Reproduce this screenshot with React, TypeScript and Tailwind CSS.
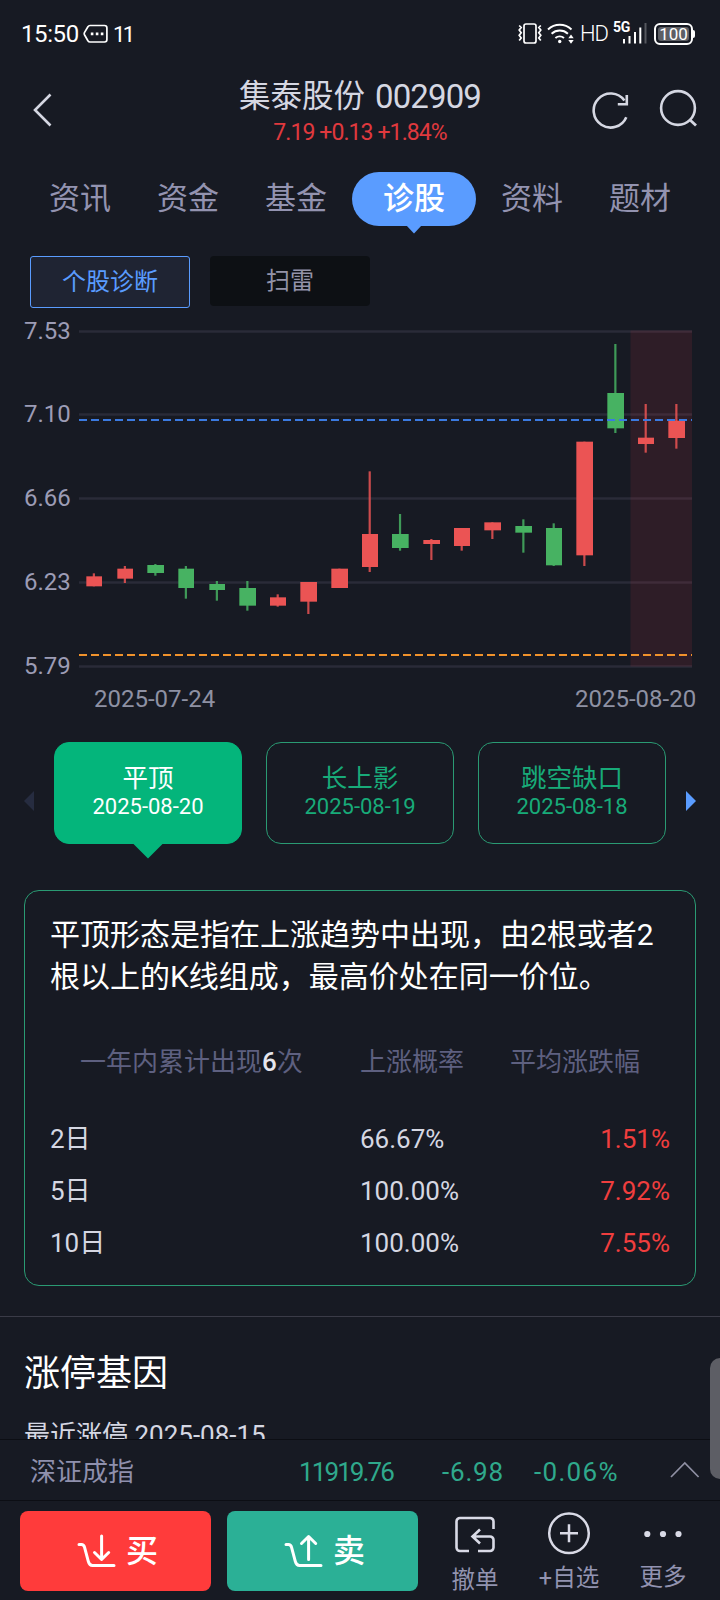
import React from "react";

type Candle = { x: number; w: number; top: number; bottom: number; high: number; low: number; up: boolean };

const RED = "#eb5454";
const GREEN = "#47b262";

// Chart geometry is kept in thirds of a pixel (device units).
const CANDLES: Candle[] = [
  { x: 259, w: 47, top: 799, bottom: 829, high: 790, low: 829, up: true },
  { x: 352, w: 47, top: 776, bottom: 806, high: 768, low: 819, up: true },
  { x: 442, w: 50, top: 765, bottom: 789, high: 762, low: 797, up: false },
  { x: 535, w: 47, top: 776, bottom: 834, high: 768, low: 866, up: false },
  { x: 628, w: 47, top: 822, bottom: 840, high: 813, low: 872, up: false },
  { x: 718, w: 50, top: 834, bottom: 887, high: 813, low: 902, up: false },
  { x: 810, w: 48, top: 862, bottom: 887, high: 853, low: 890, up: true },
  { x: 901, w: 50, top: 816, bottom: 875, high: 816, low: 912, up: true },
  { x: 994, w: 50, top: 776, bottom: 834, high: 776, low: 834, up: true },
  { x: 1086, w: 48, top: 672, bottom: 771, high: 484, low: 786, up: true },
  { x: 1176, w: 50, top: 672, bottom: 714, high: 612, low: 722, up: false },
  { x: 1270, w: 50, top: 690, bottom: 702, high: 687, low: 750, up: true },
  { x: 1362, w: 48, top: 654, bottom: 708, high: 654, low: 722, up: true },
  { x: 1453, w: 50, top: 637, bottom: 661, high: 637, low: 687, up: true },
  { x: 1546, w: 50, top: 648, bottom: 668, high: 628, low: 728, up: false },
  { x: 1638, w: 48, top: 654, bottom: 766, high: 640, low: 768, up: false },
  { x: 1729, w: 50, top: 395, bottom: 736, high: 395, low: 768, up: true },
  { x: 1822, w: 50, top: 249, bottom: 355, high: 102, low: 369, up: false },
  { x: 1914, w: 48, top: 383, bottom: 402, high: 282, low: 428, up: true },
  { x: 2005, w: 50, top: 332, bottom: 384, high: 282, low: 416, up: true },
];

const GRID = [
  { y: 21.5, label: "7.53", base: 29 },
  { y: 104.5, label: "7.10", base: 112 },
  { y: 188.5, label: "6.66", base: 196 },
  { y: 272.5, label: "6.23", base: 280 },
  { y: 356.5, label: "5.79", base: 364 },
];

function StatusBar() {
  return (
    <div className="flex h-[68px] shrink-0 items-center text-white">
      <span className="ml-[21px] w-[62px] whitespace-nowrap text-[24px] leading-[34px] tracking-[-0.4px]">15:50</span>
      <svg className="h-[20px] w-[26px]" viewBox="0 0 26 20" fill="none" stroke="#fff" strokeWidth="1.7">
        <path d="M7 1.500h14.500a2.400 2.400 0 0 1 2.400 2.400v11.700a2.400 2.400 0 0 1-2.400 2.400H7c-1 0-1.600-.5-2.100-1.300L1.600 11a2.500 2.500 0 0 1 0-2.600L4.900 2.800C5.400 2 6 1.500 7 1.500z" />
        <path d="M7.800 8.600h2.600v2.600H7.800zM12.800 8.600h2.600v2.600h-2.600zM17.800 8.600h2.600v2.600h-2.600z" fill="#fff" stroke="none" />
      </svg>
      <span className="ml-[4px] mt-[2px] whitespace-nowrap text-[22px] leading-[34px] tracking-[-2.600px]">11</span>
      <svg className="ml-auto h-[26px] w-[24px]" viewBox="0 0 24 26" fill="none" stroke="#fff" strokeWidth="1.700">
        <rect x="6" y="3" width="12" height="19" rx="2" />
        <path d="M1.200 4.500l2 2-2 2.600 2 2.600-2 2.600 2 2.600-2 2.600M22.800 4.500l-2 2 2 2.600-2 2.600 2 2.600-2 2.600 2 2.600" strokeWidth="1.700" />
      </svg>
      <svg className="ml-[5px] h-[24px] w-[28px]" viewBox="0 0 28 24" fill="none" stroke="#fff" strokeWidth="2">
        <path d="M1 7.400a17.500 17.500 0 0 1 23.500 0M4.600 11.700a12 12 0 0 1 16.300 0M8.400 16a6.800 6.800 0 0 1 8.600 0" />
        <circle cx="12.700" cy="19.500" r="1.700" fill="#fff" stroke="none" />
        <path d="M21.300 16.200l2.700-3.800 2.700 3.800zM21.300 18h5.400L24 21.800z" fill="#fff" stroke="none" />
      </svg>
      <span className="ml-[5px] w-[29px] whitespace-nowrap text-[22px] font-light leading-[34px] tracking-[-1px]">HD</span>
      <div className="relative ml-[5px] mr-[-1px] h-[26px] w-[34px]">
        <span className="absolute left-[-1px] top-0 text-[14px] font-bold leading-[12px] tracking-[-0.3px]">5G</span>
        <svg className="absolute inset-0" width="34" height="26" viewBox="0 0 34 26" stroke="#fff" strokeWidth="2">
          <path d="M10 18v4.500M15.500 15v7.500M21 11v11.500M26.300 6.500v16" />
          <path d="M31.500 2v20.500" stroke="#55575e" />
        </svg>
      </div>
      <div className="ml-[7px] mt-[-1px] flex h-[22px] w-[39px] items-center justify-center rounded-[6px] border-2 border-white p-[2px]">
        <span className="w-full rounded-[3px] bg-[#5d5f65] text-center text-[17px] leading-[14px]">100</span>
      </div>
      <span className="mr-[25px] h-[8px] w-[2px] rounded-r bg-white" />
    </div>
  );
}

function Header() {
  return (
    <div className="flex h-[92px] shrink-0 items-start">
      <svg className="ml-[29px] mt-[22px]" width="26" height="40" viewBox="0 0 26 40" fill="none" stroke="#d5d7e2" strokeWidth="2.600">
        <path d="M21.500 4.500L6 20l15.500 15.500" />
      </svg>
      <div className="ml-[145px] flex w-[320px] flex-col items-center whitespace-nowrap">
        <div className="mt-[9px] flex gap-[10px] text-[31.500px] leading-[40px] text-[#d5d7e2]">
          <span>集泰股份</span>
          <span className="text-[33px] tracking-[-0.900px]">002909</span>
        </div>
        <div className="mt-[2px] text-[23px] leading-[28px] tracking-[-0.900px] text-[#e0393e]">7.19 +0.13 +1.84%</div>
      </div>
      <svg className="ml-[70px] mt-[22px]" width="40" height="40" viewBox="0 0 40 40" fill="none" stroke="#d5d7e2" strokeWidth="2.600">
        <path d="M36.300 27.200A17 17 0 1 1 34.400 10.500" />
        <path d="M36.800 5v9.300h-9" />
      </svg>
      <svg className="ml-[28px] mt-[20px]" width="40" height="42" viewBox="0 0 40 42" fill="none" stroke="#d5d7e2" strokeWidth="2.600">
        <circle cx="20" cy="20" r="16.900" />
        <path d="M31.500 31.500l6.500 6" strokeWidth="2.800" />
      </svg>
    </div>
  );
}

function Tabs() {
  const base = "w-[62px] text-center leading-[53px]";
  return (
    <div className="flex h-[84px] shrink-0 items-start gap-[46px] whitespace-nowrap pl-[49px] pt-[12px] text-[31px] text-[#9393b0]">
      <span className={base}>资讯</span>
      <span className={base}>资金</span>
      <span className={base}>基金</span>
      <span className="relative -mx-[21px] h-[53.500px] w-[124px] rounded-[27px] bg-[#5a9cff] text-center font-medium leading-[53px] text-white">
        诊股
        <svg className="absolute left-[54px] top-[53px]" width="16" height="9" viewBox="0 0 16 9">
          <path d="M0 0h16L8 8.500z" fill="#5a9cff" />
        </svg>
      </span>
      <span className={base}>资料</span>
      <span className={base}>题材</span>
    </div>
  );
}

function SubTabs() {
  return (
    <div className="flex h-[66px] shrink-0 items-start gap-5 pl-[30px] pt-[12px] text-[24px]">
      <div className="h-[52px] w-[160px] rounded-[3px] border border-[#5a9cff] bg-[#1f2433] text-center leading-[51px] text-[#5a9cff]">
        个股诊断
      </div>
      <div className="h-[50px] w-[160px] rounded-[4px] bg-[#0d1014] text-center leading-[51px] text-[#9393a8]">扫雷</div>
    </div>
  );
}

function Chart() {
  return (
    <svg className="block shrink-0" width="720" height="410" viewBox="0 0 720 410">
      {GRID.map((g) => (
        <g key={g.label}>
          <path d={`M79 ${g.y}H692`} stroke="#2a2b38" strokeWidth="2.400" />
          <text x="24" y={g.base} fontSize="24" fill="#9c9cb5">
            {g.label}
          </text>
        </g>
      ))}
      <rect x="630.500" y="20.500" width="61.500" height="336" fill="#eb3b4b" fillOpacity="0.11" />
      {CANDLES.map((c) => {
        const color = c.up ? RED : GREEN;
        const mid = (c.x + c.w / 2) / 3 - 0.3;
        return (
          <g key={c.x} fill={color}>
            <rect x={mid - 1.1} y={c.high / 3} width="2.200" height={(c.low - c.high) / 3} fillOpacity="0.85" />
            <rect x={c.x / 3} y={c.top / 3} width={c.w / 3} height={(c.bottom - c.top) / 3} />
          </g>
        );
      })}
      <path d="M79 110H692" stroke="#3b7ae0" strokeWidth="2" strokeDasharray="8 4" />
      <path d="M79 345H692" stroke="#f0922c" strokeWidth="2" strokeDasharray="8 4" />
      <text x="94" y="396.500" fontSize="24" fill="#8e91a3">
        2025-07-24
      </text>
      <text x="575" y="396.500" fontSize="24" fill="#8e91a3">
        2025-08-20
      </text>
    </svg>
  );
}

function PatternCard({ name, date, active }: { name: string; date: string; active?: boolean }) {
  return (
    <div
      className={
        "relative flex h-[102px] w-[188px] flex-col items-center rounded-[15px] border pt-[19px] " +
        (active ? "border-[#04b57b] bg-[#04b57b] text-white" : "border-[#2a9a73] text-[#18ab79]")
      }
    >
      <span className="text-[25.500px] leading-[33px]">{name}</span>
      <span className="text-[22px] leading-[24px]">{date}</span>
      {active && (
        <svg className="absolute left-[78px] top-[100px]" width="30" height="16" viewBox="0 0 30 16">
          <path d="M0 .500h30L15 15.500z" fill="#04b57b" />
        </svg>
      )}
    </div>
  );
}

function Patterns() {
  return (
    <div className="flex h-[170px] shrink-0 items-start pl-[24px] pt-[22px]">
      <svg className="mt-[49px]" width="10" height="20" viewBox="0 0 10 20">
        <path d="M10 0v20L0 10z" fill="#262c40" />
      </svg>
      <div className="mx-[20px] flex gap-6">
        <PatternCard name="平顶" date="2025-08-20" active />
        <PatternCard name="长上影" date="2025-08-19" />
        <PatternCard name="跳空缺口" date="2025-08-18" />
      </div>
      <svg className="mt-[49px]" width="10" height="20" viewBox="0 0 10 20">
        <path d="M0 0v20l10-10z" fill="#5a9cff" />
      </svg>
    </div>
  );
}

const ROWS = [
  ["2日", "66.67%", "1.51%"],
  ["5日", "100.00%", "7.92%"],
  ["10日", "100.00%", "7.55%"],
];

function Detail() {
  return (
    <div className="mx-6 h-[396px] shrink-0 whitespace-nowrap rounded-[15px] border border-[#2a9a73] px-[25px] pt-[23px]">
      <div className="text-[30px] leading-[42px] text-white">
        <p>平顶形态是指在上涨趋势中出现，由2根或者2</p>
        <p>根以上的K线组成，最高价处在同一价位。</p>
      </div>
      <div className="mt-[46px] flex h-[36px] pl-[30px] text-[26px] leading-[36px] text-[#5e6080]">
        <span className="w-[280px]">
          一年内累计出现<span className="font-medium text-[#e6e6ee]">6</span>次
        </span>
        <span className="w-[150px]">上涨概率</span>
        <span>平均涨跌幅</span>
      </div>
      <div className="mt-[33px] text-[26px] leading-[52px] text-[#d5d7e2]">
        {ROWS.map((r) => (
          <div key={r[0]} className="flex h-[52px]">
            <span className="w-[310px]">{r[0]}</span>
            <span className="w-[160px]">{r[1]}</span>
            <span className="w-[150px] text-right text-[#f03e3e]">{r[2]}</span>
          </div>
        ))}
      </div>
    </div>
  );
}

function Gene() {
  return (
    <div className="mt-[30px] h-[123px] shrink-0 overflow-hidden whitespace-nowrap border-t border-[#3a3b47] pl-[24px]">
      <h2 className="mt-[33px] text-[36px] leading-[48px] text-white">涨停基因</h2>
      <p className="mt-[18px] text-[26px] leading-[38px] text-[#d5d7e2]">最近涨停 2025-08-15</p>
    </div>
  );
}

function IndexBar() {
  return (
    <div className="flex h-[62px] shrink-0 items-center whitespace-nowrap border-y border-[#0c0e14] pl-[30px] pt-[3px] text-[26px] leading-[36px] text-[#2fa98c]">
      <span className="w-[269px] text-[#8f90ad]">深证成指</span>
      <span className="w-[143px] tracking-[-1.900px]">11919.76</span>
      <span className="w-[92px] tracking-[0.800px]">-6.98</span>
      <span className="w-[134px] tracking-[1.300px]">-0.06%</span>
      <svg className="mt-[-4px]" width="34" height="20" viewBox="0 0 34 20" fill="none" stroke="#8f90a3" strokeWidth="1.700">
        <path d="M3 17L16.800 3 30.600 17" />
      </svg>
    </div>
  );
}

function ActionBar() {
  const btn = "flex h-[80px] w-[191px] items-center rounded-[8px] pl-[56px] text-[32px] font-medium leading-[80px] text-white";
  const item = "flex w-[94px] flex-col items-center text-[23.500px] leading-[28px] text-[#9293b0]";
  return (
    <div className="flex h-[99px] shrink-0 items-start whitespace-nowrap pl-[20px] pt-[10px]">
      <div className={btn + " bg-[#ff3b3b]"}>
        <svg width="40" height="38" viewBox="0 0 40 38" fill="none" stroke="#fff" strokeWidth="3" strokeLinecap="round" strokeLinejoin="round">
          <path d="M3 12.500h2.500c1.800 0 2.500.9 3 2.600l3.800 14.200c.6 2.200 1.700 4.200 4.200 4.200H38" />
          <path d="M25.600 4v23M18.500 20.500l7.100 7 7.100-7" />
        </svg>
        <span className="ml-[10px]">买</span>
      </div>
      <div className={btn + " ml-[16px] bg-[#2bb096]"}>
        <svg width="40" height="38" viewBox="0 0 40 38" fill="none" stroke="#fff" strokeWidth="3" strokeLinecap="round" strokeLinejoin="round">
          <path d="M3 12.500h2.500c1.800 0 2.500.9 3 2.600l3.800 14.200c.6 2.200 1.700 4.200 4.200 4.200H38" />
          <path d="M25.600 27.500V4.500M18.500 11.500l7.100-7 7.100 7" />
        </svg>
        <span className="ml-[10px]">卖</span>
      </div>
      <div className={item + " ml-[10px]"}>
        <svg className="mt-[2px]" width="44" height="44" viewBox="0 0 44 44" fill="none" stroke="#d9dae6" strokeWidth="2.600">
          <path d="M40.500 16V8.500a3.500 3.500 0 0 0-3.500-3.500H7a3.500 3.500 0 0 0-3.500 3.500V34.500A3.500 3.500 0 0 0 7 38h9M25 38h12a3.500 3.500 0 0 0 3.500-3.500V27a3.500 3.500 0 0 0-3.500-3.500H20M27 16.500l-7.500 7 7.500 7" />
        </svg>
        <span className="mt-[9px]">撤单</span>
      </div>
      <div className={item}>
        <svg width="44" height="44" viewBox="0 0 44 44" fill="none" stroke="#d9dae6" strokeWidth="2.500">
          <circle cx="22" cy="22.300" r="19.800" />
          <path d="M13 22.300h18M22 13.300v18" />
        </svg>
        <span className="mt-[9px]">+自选</span>
      </div>
      <div className={item}>
        <svg width="44" height="44" viewBox="0 0 44 44" fill="#d9dae6">
          <circle cx="6.300" cy="23" r="3.100" />
          <circle cx="22" cy="23" r="3.100" />
          <circle cx="37.500" cy="23" r="3.100" />
        </svg>
        <span className="mt-[8px]">更多</span>
      </div>
    </div>
  );
}

export default function App() {
  return (
    <div className="relative flex h-[1600px] w-[720px] flex-col overflow-hidden bg-[#171a23] font-['Roboto','Noto_Sans_CJK_SC',sans-serif]">
      <StatusBar />
      <Header />
      <Tabs />
      <SubTabs />
      <Chart />
      <Patterns />
      <Detail />
      <Gene />
      <IndexBar />
      <ActionBar />
      <div className="absolute right-0 top-[1358px] h-[121px] w-[10px] rounded-l-[10px] bg-[#5d5e65]" />
    </div>
  );
}
